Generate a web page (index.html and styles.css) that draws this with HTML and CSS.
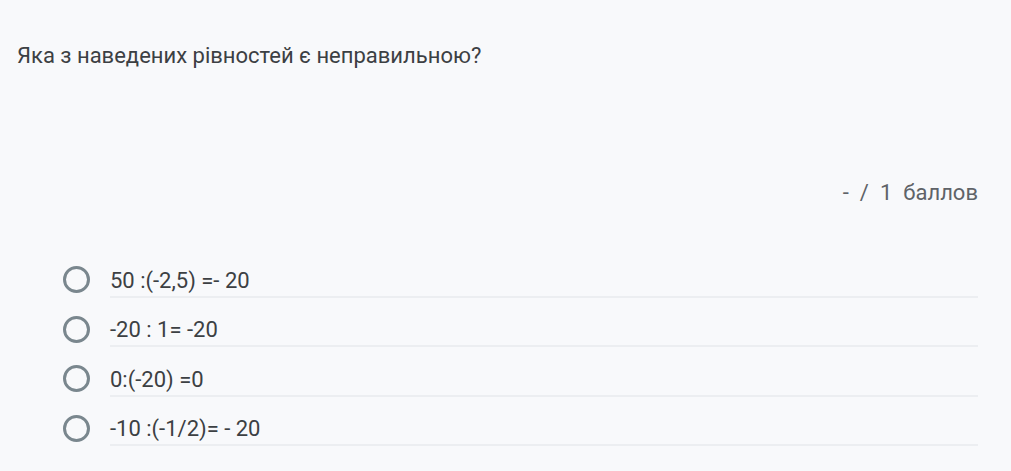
FILE: index.html
```html
<!DOCTYPE html>
<html lang="uk">
<head>
  <meta charset="UTF-8">
  <title>Тест</title>
  <link rel="stylesheet" href="styles.css">
</head>
<body>
  <div class="question">
    <h2 class="question-title">Яка з наведених рівностей є неправильною?</h2>

    <div class="score">
      <span>-</span>
      <span>/</span>
      <span>1</span>
      <span>баллов</span>
    </div>

    <ul class="options">
      <li class="option">
        <span class="radio"></span>
        <span class="option-label">50 :(-2,5) =- 20</span>
      </li>
      <li class="option">
        <span class="radio"></span>
        <span class="option-label">-20 : 1= -20</span>
      </li>
      <li class="option">
        <span class="radio"></span>
        <span class="option-label">0:(-20) =0</span>
      </li>
      <li class="option">
        <span class="radio"></span>
        <span class="option-label">-10 :(-1/2)= - 20</span>
      </li>
    </ul>
  </div>
</body>
</html>
```

FILE: styles.css
```css
* {
  margin: 0;
  padding: 0;
  box-sizing: border-box;
}

body {
  font-family: Roboto, "Liberation Sans", sans-serif;
  background-color: #f8f9fb;
  color: #3c4043;
}

.question {
  padding: 42px 33px 0 17px;
}

.question-title {
  font-size: 22px;
  font-weight: 400;
  line-height: 28px;
}

.score {
  display: flex;
  justify-content: flex-end;
  gap: 11px;
  margin-top: 109px;
  font-size: 22px;
  line-height: 28px;
  color: #5f6368;
}

.options {
  list-style: none;
  margin-top: 48px;
  padding-left: 46px;
}

.option {
  display: flex;
  align-items: center;
  height: 49.5px;
}

.radio {
  flex: none;
  width: 27px;
  height: 27px;
  border: 3px solid #7a878e;
  border-radius: 50%;
  margin-right: 20px;
}

.option-label {
  flex: 1;
  font-size: 22px;
  line-height: 28px;
  padding: 5px 0 1px;
  border-bottom: 2px solid #eceef1;
}
```
